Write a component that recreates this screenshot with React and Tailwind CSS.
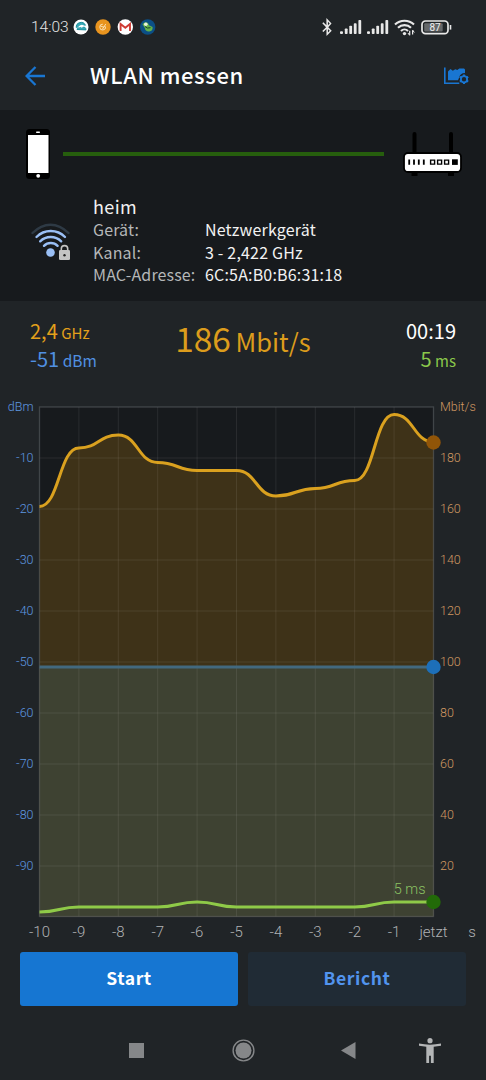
import { FaBluetoothB } from 'react-icons/fa';

const PLOT = { left: 39.5, right: 433.5, top: 12, bottom: 521.5 };
const STEP_X = (PLOT.right - PLOT.left) / 10;
const STEP_Y = 51;

const rate = [111.5, 53, 40, 67.5, 75.5, 75.5, 101, 93.5, 85.5, 19.5, 47];
const ping = [517, 512, 512, 512, 507, 512, 512, 512, 512, 507, 507];
const steps = [0, 1, 2, 3, 4, 5, 6, 7, 8, 9, 10];
const rows = [1, 2, 3, 4, 5, 6, 7, 8, 9];

const xAt = (i) => PLOT.left + i * STEP_X;

// flat tangents at every sample
function smooth(values) {
  return values.reduce((d, y, i) => {
    if (i === 0) return `M${xAt(0)} ${y}`;
    const mid = (xAt(i - 1) + xAt(i)) / 2;
    return `${d} C${mid} ${values[i - 1]} ${mid} ${y} ${xAt(i)} ${y}`;
  }, '');
}

function SignalBars() {
  return (
    <svg width="22" height="15" viewBox="0 0 22 15" fill="#e8e8e8">
      <rect x="0" y="11.2" width="3" height="2.8" rx="1" />
      <rect x="4.8" y="8.5" width="2.8" height="5.5" rx="0.8" />
      <rect x="9.3" y="5.8" width="2.8" height="8.2" rx="0.8" />
      <rect x="13.8" y="3.2" width="2.8" height="10.8" rx="0.8" />
      <rect x="18.4" y="0" width="2.8" height="14" rx="0.8" />
    </svg>
  );
}

function StatusBar() {
  return (
    <div className="h-[54px] shrink-0 pl-[31px] pr-[34px] flex items-center justify-between">
      <div className="flex items-center">
        <span className="w-[41px] font-[Roboto] font-light text-[15.5px] leading-4 text-[#e4e4e4] whitespace-nowrap">14:03</span>
        <svg width="84" height="16" viewBox="-1 0 84 16">
          <circle cx="8" cy="8" r="7.5" fill="#fff" />
          <path d="M3.3 8.8A4.8 4.8 0 0 1 12.5 6.4M4 10.5c1-3 3.4-4 5-2.2 2-1 4 .2 4 2.6z" fill="#38a8b5" stroke="#1b8f9c" strokeWidth="1" />
          <path d="M5.5 7.5Q9 4 12 7.3Q9.5 7 9 9Q7.4 7.2 5.5 9z" fill="#fff" />
          <circle cx="30" cy="8" r="7.7" fill="#e8941f" />
          <path d="M32.5 7.5a2.9 2.9 0 1 1-2.7-2.3M27.2 6.8l3.5 1.5 2-3.2M29.5 10l2-3" fill="none" stroke="#fbe0b4" strokeWidth="1" />
          <circle cx="52.3" cy="8" r="7.7" fill="#fff" />
          <path d="M47.6 12V5l4.7 3.8L57 5v7" fill="none" stroke="#cf3c35" strokeWidth="1.9" />
          <circle cx="74.7" cy="8" r="7.7" fill="#0b4f86" />
          <path d="M69.5 5.2Q72 2 75 4l1 2.3 3.6 1.6q.4 4-3.4 4.6-4 .2-4.4-3.4z" fill="#62b14b" />
          <circle cx="72.8" cy="5.3" r="1.8" fill="#e9f2dd" />
          <path d="M72 7.5q2 2.5 5.5 1.2" fill="none" stroke="#17452c" strokeWidth="1" />
        </svg>
      </div>
      <div className="flex items-center">
        <FaBluetoothB className="w-[14px] h-[18px] text-[#e8e8e8] mr-1.5" />
        <SignalBars />
        <div className="w-[5px]" />
        <SignalBars />
        <svg width="22" height="17" viewBox="0 0 22 17" className="ml-[5px]" fill="none" stroke="#e8e8e8" strokeWidth="2.1">
          <path d="M1 5.6a13.6 13.6 0 0 1 19 0M4 8.8a9.2 9.2 0 0 1 13 0M7 11.9a5 5 0 0 1 7 0" />
          <circle cx="10.5" cy="14.6" r="1.7" fill="#e8e8e8" stroke="none" />
          <path d="M15.7 11.7v4.4M18.6 11.2v4.4" strokeWidth="1.2" />
          <path d="M14 14l1.7 2.5M18.6 11l1.7 2.5" strokeWidth="1" />
        </svg>
        <svg width="31" height="15" viewBox="0 0 31 15" className="ml-[5px]">
          <rect x="1" y="1" width="26" height="12.6" rx="3.4" fill="none" stroke="#e8e8e8" strokeWidth="1.7" />
          <rect x="3.2" y="3.2" width="18.5" height="8.2" rx="1" fill="#65686a" />
          <path d="M29.5 5v4.6" stroke="#e8e8e8" strokeWidth="1.6" />
          <text x="14" y="11.1" textAnchor="middle" fontFamily="Roboto" fontSize="10" fill="#f1f1f1">87</text>
        </svg>
      </div>
    </div>
  );
}

function Header() {
  return (
    <div className="h-14 shrink-0 pl-[25px] pr-[17px] flex items-center">
      <svg width="20" height="20" viewBox="0 0 20 20" className="-mt-3" fill="none" stroke="#1976d2" strokeWidth="2.3">
        <path d="M20 10H2M10.5 1L1.6 10l8.9 9" />
      </svg>
      <h1 className="ml-[45px] -mt-4 text-[22px] leading-8 font-medium tracking-[0.6px] text-white whitespace-nowrap">WLAN messen</h1>
      <svg width="26" height="18" viewBox="0 0 26 18" className="ml-auto -mt-3">
        <path d="M1.8 .5v15.7h14.5" fill="none" stroke="#1976d2" strokeWidth="1.6" />
        <path d="M5 13.3V4.5L7.5 2l2.3 1.8 2.5-1.6 2 .7 2-1.4H21l1 1v3.6q-5 .2-5.7 4.2l-1.3 3z" fill="#1976d2" />
        <circle cx="21" cy="12.2" r="3.1" fill="none" stroke="#1976d2" strokeWidth="1.8" />
        <path d="M21 7.4v1.8M21 15.2V17M16.8 9.8l1.6.9M23.6 13.7l1.6.9M16.8 14.6l1.6-.9M23.6 10.7l1.6-.9" stroke="#1976d2" strokeWidth="2.1" />
      </svg>
    </div>
  );
}

function Network() {
  const details = [
    ['Gerät:', 'Netzwerkgerät'],
    ['Kanal:', '3 - 2,422 GHz'],
    ['MAC-Adresse:', '6C:5A:B0:B6:31:18'],
  ];
  return (
    <div className="h-[191px] shrink-0 bg-[#171a1d]">
      <div className="h-[84px] pt-[19px] pl-[26px] pr-[24px] flex items-start">
        <svg width="24" height="50" viewBox="0 0 24 50">
          <rect width="24" height="50" rx="3.5" fill="#000" />
          <rect x="2" y="6" width="20.5" height="38" fill="#fff" />
          <rect x="10" y="2.5" width="4" height="1.4" rx=".7" fill="#fff" />
          <circle cx="12.2" cy="46.8" r="1.9" fill="#fff" />
        </svg>
        <div className="mt-[23px] ml-[13px] w-[320.5px] h-1 bg-[#265e0d]" />
        <svg width="59" height="46" viewBox="0 0 59 46" className="mt-[3px] ml-auto">
          <path d="M11.5 2v20M48 2v20" stroke="#000" strokeWidth="4" strokeLinecap="round" />
          <path d="M8.5 42h6M45 42h6" stroke="#000" strokeWidth="4" />
          <rect x="1" y="21" width="57" height="19" rx="4" fill="#fff" stroke="#000" strokeWidth="1.8" />
          <path d="M6.2 27.5v5.2M11 27.5v5.2M15.8 27.5v5.2M20.8 27.5v5.2" stroke="#000" strokeWidth="1.8" />
          <path d="M27.6 28.1h4v4h-4zM34.6 28.1h4v4h-4zM41.6 28.1h4v4h-4z" fill="none" stroke="#000" strokeWidth="1.4" />
          <rect x="49" y="27.3" width="5.8" height="5.6" fill="#000" />
        </svg>
      </div>
      <div className="flex pl-[31px]">
        <svg width="40" height="40" viewBox="0 0 40 40" className="mt-[29px]" fill="none" strokeWidth="2.4" strokeLinecap="round">
          <path d="M1.5 10Q10 1.7 19.5 1.7T37.5 10" stroke="#2e3a45" />
          <path d="M5.5 14a20 20 0 0 1 28.5 0M9.2 18.3a15 15 0 0 1 21 0M13 22.8a9.6 9.6 0 0 1 13.6 0" stroke="#9abff5" />
          <circle cx="19.5" cy="29.5" r="4.3" fill="#9abff5" stroke="none" />
          <rect x="28" y="27" width="11" height="10" rx="1.3" fill="#c4c4c4" />
          <path d="M30.3 27v-1.2a3.2 3.2 0 0 1 6.4 0V27" stroke="#c4c4c4" strokeWidth="1.6" />
          <circle cx="33.5" cy="32.2" r="1.2" fill="#222" />
        </svg>
        <div className="ml-[22px] text-[16px] text-[#f2f2f2]">
          <div className="text-[18px] leading-[24px] tracking-[0.4px]">heim</div>
          {details.map(([label, value]) => (
            <div key={label} className="flex leading-[22.5px] whitespace-nowrap">
              <span className="w-[112px] tracking-[0.15px] text-[#b5b7b8]">{label}</span>
              <span className="tracking-[0.18px]">{value}</span>
            </div>
          ))}
        </div>
      </div>
    </div>
  );
}

function Stats() {
  return (
    <div className="h-[94px] shrink-0 pl-[30px] pr-[30px] pt-[15px] flex justify-between items-start whitespace-nowrap">
      <div className="w-[120px]">
        <div className="h-[29px] text-[20px] leading-[29px] text-[#e3a01b]">2,4 <span className="text-[15px] -ml-px">GHz</span></div>
        <div className="h-[29px] text-[20px] leading-[27px] text-[#5090e2]">-51 <span className="text-[15.5px] -ml-px">dBm</span></div>
      </div>
      <div className="text-[33.5px] leading-[44px] text-[#dc9c1c]">186 <span className="text-[25.5px] -ml-[3px]">Mbit/s</span></div>
      <div className="w-[120px] text-right">
        <div className="h-[29px] text-[20px] leading-[29px] text-white">00:19</div>
        <div className="h-[29px] text-[20px] leading-[27px] text-[#8bc84b]">5 <span className="text-[15px] -ml-px">ms</span></div>
      </div>
    </div>
  );
}

function Chart() {
  const { left, right, top, bottom } = PLOT;
  const ratePath = smooth(rate);
  return (
    <svg width="486" height="550" viewBox="0 0 486 550" className="shrink-0 font-[Roboto] font-light">
      <rect x={left} y={top} width={right - left} height={bottom - top} fill="#171a1d" />
      <path d={`${ratePath} V${bottom} H${left} Z`} fill="#3e3218" />
      <rect x={left} y="272" width={right - left} height={bottom - 272} fill="#3e4232" />
      <g stroke="#fff" strokeOpacity="0.08">
        {steps.slice(1, 10).map(i => <path key={i} d={`M${xAt(i)} ${top}V${bottom}`} />)}
        {rows.map(i => <path key={i} d={`M${left} ${top + i * STEP_Y}H${right}`} />)}
      </g>
      <rect x={left} y={top} width={right - left} height={bottom - top} fill="none" stroke="#6e7478" strokeOpacity="0.45" strokeWidth="1.3" />
      <path d={`M${left} 272H${right}`} stroke="#42697f" strokeWidth="3" />
      <path d={ratePath} fill="none" stroke="#daa11f" strokeWidth="3" />
      <path d={smooth(ping)} fill="none" stroke="#8fca48" strokeWidth="3" />
      <circle cx={right} cy="47.5" r="7.2" fill="#915508" />
      <circle cx={right} cy="272" r="7.2" fill="#1d6fb9" />
      <circle cx={right} cy="507" r="7.2" fill="#226a08" />
      <text x="425.5" y="499" textAnchor="end" fontSize="14.5" fill="#8bc163">5 ms</text>

      <g fontSize="12.5" textAnchor="end" fill="#5e97e0">
        <text x="33.5" y="15.5">dBm</text>
        {rows.map(i => <text key={i} x="33.5" y={top + i * STEP_Y + 4}>{-10 * i}</text>)}
      </g>
      <g fontSize="12.5" fill="#cf9862">
        <text x="440" y="15.5">Mbit/s</text>
        {rows.map(i => <text key={i} x="440" y={top + i * STEP_Y + 4}>{200 - 20 * i}</text>)}
      </g>
      <g fontSize="15" textAnchor="middle" fill="#b0b2b4">
        {steps.map(i => <text key={i} x={xAt(i)} y="542">{i === 10 ? 'jetzt' : i - 10}</text>)}
        <text x="472" y="542">s</text>
      </g>
    </svg>
  );
}

function NavBar() {
  return (
    <div className="flex-1 pl-[129px] pr-[45px] pt-[29px] flex items-start justify-between">
      <div className="mt-2 size-[15px] bg-[#858789]" />
      <svg width="23" height="23" viewBox="0 0 23 23" className="mt-1 ml-[87px]">
        <circle cx="11.5" cy="11.5" r="10.4" fill="none" stroke="#858789" strokeWidth="1.4" />
        <circle cx="11.5" cy="11.5" r="8" fill="#858789" />
      </svg>
      <svg width="15" height="17" viewBox="0 0 15 17" className="mt-[7px] ml-[85px]">
        <path d="M14.5 0v17L0 8.5z" fill="#858789" />
      </svg>
      <svg width="22" height="26" viewBox="0 0 22 26" className="ml-[62px] mt-[3px]" fill="#b4b6b7">
        <circle cx="11" cy="2.7" r="2.6" />
        <path d="M0 5.6q11 2.2 22 0v2.2l-7.3 1V25h-2.8v-7.2h-1.8V25H7.3V8.8L0 7.8z" />
      </svg>
    </div>
  );
}

export default function App() {
  return (
    <div className="w-[486px] h-[1080px] overflow-hidden flex flex-col bg-[#202427] font-['Noto_Sans_CJK_SC',sans-serif]">
      <StatusBar />
      <Header />
      <Network />
      <Stats />
      <Chart />
      <div className="mt-[7px] px-5 shrink-0 flex gap-2.5">
        <button className="flex-1 h-[54px] pb-0.5 rounded-[3px] bg-[#1676d2] text-white text-[17.5px] font-bold tracking-[0.6px]">Start</button>
        <button className="flex-1 h-[54px] pb-0.5 rounded-[3px] bg-[#202b35] text-[#5294ee] text-[17.5px] font-bold tracking-[0.6px]">Bericht</button>
      </div>
      <NavBar />
    </div>
  );
}
